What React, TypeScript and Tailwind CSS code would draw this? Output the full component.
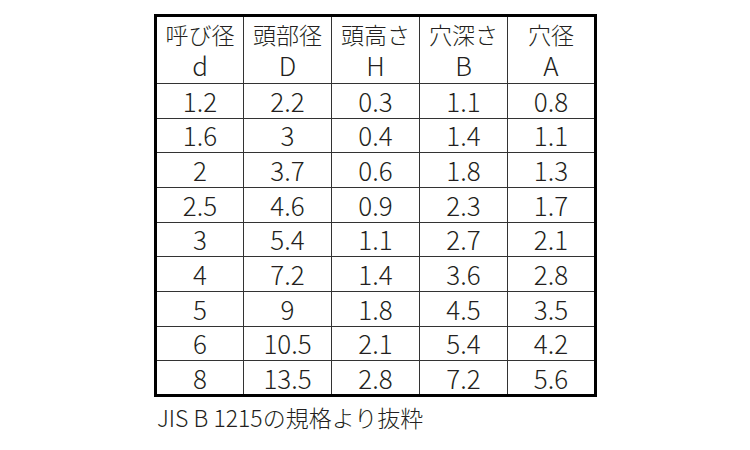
const HEAD: [string, string][] = [
  ['呼び径', 'd'],
  ['頭部径', 'D'],
  ['頭高さ', 'H'],
  ['穴深さ', 'B'],
  ['穴径', 'A'],
];

const ROWS: string[][] = [
  ['1.2', '2.2', '0.3', '1.1', '0.8'],
  ['1.6', '3', '0.4', '1.4', '1.1'],
  ['2', '3.7', '0.6', '1.8', '1.3'],
  ['2.5', '4.6', '0.9', '2.3', '1.7'],
  ['3', '5.4', '1.1', '2.7', '2.1'],
  ['4', '7.2', '1.4', '3.6', '2.8'],
  ['5', '9', '1.8', '4.5', '3.5'],
  ['6', '10.5', '2.1', '5.4', '4.2'],
  ['8', '13.5', '2.8', '7.2', '5.6'],
];

export default function App() {
  return (
    <div
      className="w-[750px] h-[450px] bg-white text-[#231f20] font-light pl-[154px] pt-[14px]"
      style={{ fontFamily: '"Noto Sans CJK JP", "Noto Sans", sans-serif' }}
    >
      <table className="w-[443px] table-fixed border-collapse border-[3px] border-black">
        <thead>
          <tr className="h-[68px]">
            {HEAD.map(([ja, sym], i) => (
              <th
                key={sym}
                className={`font-light text-center align-middle border-b border-[#333] p-0 ${i < 4 ? 'border-r' : ''}`}
              >
                <div className="text-[23px] leading-[30px]">{ja}</div>
                <div className="text-[26px] leading-[32px]">{sym}</div>
              </th>
            ))}
          </tr>
        </thead>
        <tbody>
          {ROWS.map((row, r) => (
            <tr key={r} className="h-[34.67px]">
              {row.map((v, i) => (
                <td
                  key={i}
                  className={`text-center align-middle text-[26px] leading-none p-0 border-[#333] ${i < 4 ? 'border-r' : ''} ${r < ROWS.length - 1 ? 'border-b' : ''}`}
                >
                  {v}
                </td>
              ))}
            </tr>
          ))}
        </tbody>
      </table>
      <p className="pl-[3px] mt-[5px] leading-[30px] whitespace-nowrap">
        <span className="text-[23px]">JIS B 1215</span>
        <span className="text-[23px]">の規格より抜粋</span>
      </p>
    </div>
  );
}
